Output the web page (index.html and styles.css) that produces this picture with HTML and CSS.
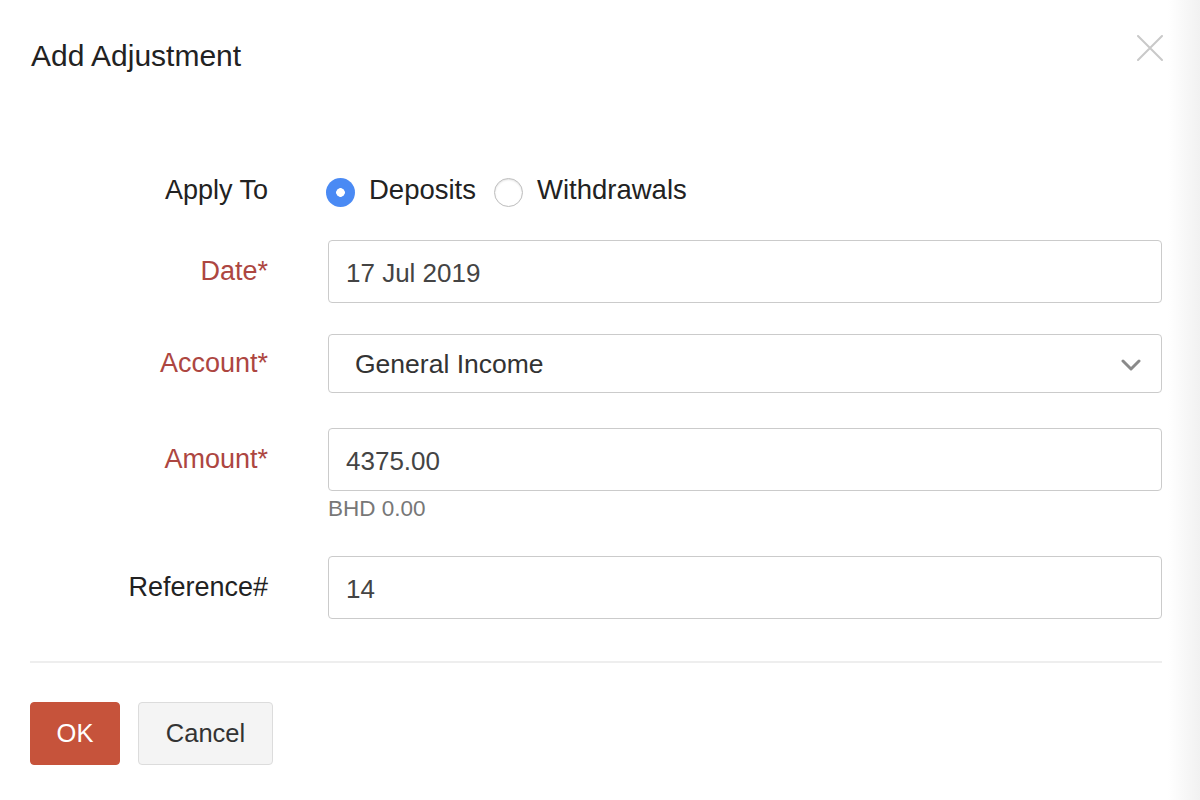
FILE: index.html
```html
<!DOCTYPE html>
<html>
<head>
<meta charset="utf-8">
<link rel="stylesheet" href="styles.css">
</head>
<body>
<div class="dialog">
  <div class="header">
    <h1 class="title">Add Adjustment</h1>
    <button class="close" aria-label="Close">
      <svg width="26" height="26" viewBox="0 0 26 26"><path d="M1 1 L25 25 M25 1 L1 25" stroke="#c9c9c9" stroke-width="2" fill="none" stroke-linecap="round"/></svg>
    </button>
  </div>

  <div class="form">
    <div class="row row-apply">
      <div class="label">Apply To</div>
      <div class="radios">
        <span class="radio checked"></span><span class="radio-text">Deposits</span>
        <span class="radio"></span><span class="radio-text">Withdrawals</span>
      </div>
    </div>

    <div class="row row-date">
      <div class="label req">Date*</div>
      <div class="field"><input class="input" type="text" value="17 Jul 2019"></div>
    </div>

    <div class="row row-account">
      <div class="label req label-select">Account*</div>
      <div class="field">
        <div class="select">
          <span class="select-text">General Income</span>
          <svg class="chevron" width="20" height="12" viewBox="0 0 20 12"><path d="M2 2 L10 10 L18 2" stroke="#8a8a8a" stroke-width="3" fill="none" stroke-linecap="round" stroke-linejoin="round"/></svg>
        </div>
      </div>
    </div>

    <div class="row row-amount">
      <div class="label req">Amount*</div>
      <div class="field">
        <input class="input" type="text" value="4375.00">
        <div class="hint">BHD 0.00</div>
      </div>
    </div>

    <div class="row row-ref">
      <div class="label">Reference#</div>
      <div class="field"><input class="input" type="text" value="14"></div>
    </div>
  </div>

  <div class="footer">
    <button class="btn btn-ok">OK</button>
    <button class="btn btn-cancel">Cancel</button>
  </div>
</div>
</body>
</html>
```

FILE: styles.css
```css
html, body {
  margin: 0;
  padding: 0;
}
body {
  width: 1200px;
  height: 800px;
  overflow: hidden;
  background: linear-gradient(to right, #ffffff 1168px, #f1f1f1 1200px);
  font-family: "Liberation Sans", Arial, sans-serif;
  color: #222;
}
.dialog {
  padding: 0 38px 0 30px;
}
.header {
  display: flex;
  justify-content: space-between;
  align-items: flex-start;
  padding-top: 38px;
}
.title {
  margin: 0;
  font-size: 30px;
  font-weight: normal;
  line-height: 36px;
  color: #222;
  padding-left: 1px;
}
.close {
  background: none;
  border: 0;
  padding: 0;
  margin: -3px -1px 0 0;
  cursor: pointer;
  display: flex;
}
.form {
  padding-top: 98px;
}
.row {
  display: grid;
  grid-template-columns: 238px 1fr;
  column-gap: 60px;
  align-items: start;
}
.label {
  text-align: right;
  font-size: 27px;
  line-height: 63px;
  color: #222;
  white-space: nowrap;
}
.label.req {
  color: #ad4641;
}
.label-select {
  line-height: 59px;
}
.row-apply {
  align-items: center;
  height: 40px;
  margin-top: 0;
}
.row-apply .label {
  line-height: 40px;
  margin-top: -4px;
}
.radios {
  display: flex;
  align-items: center;
}
.radio {
  box-sizing: border-box;
  width: 29px;
  height: 29px;
  border-radius: 50%;
  border: 1px solid #bdbdbd;
  background: #fff;
  box-shadow: inset 0 1px 2px rgba(0,0,0,0.12);
  margin-left: -2px;
  flex: none;
}
.radio.checked {
  border: 0;
  background: radial-gradient(circle, #ffffff 0 4px, #4a8af4 4.6px);
  box-shadow: none;
}
.radio-text {
  font-size: 27.5px;
  line-height: 40px;
  margin: -4px 20px 0 14px;
  color: #222;
}
.row-date { margin-top: 28px; }
.row-account { margin-top: 31px; }
.row-amount { margin-top: 35px; }
.row-ref { margin-top: 30px; }

.field {
  display: flex;
  flex-direction: column;
}
.input {
  box-sizing: border-box;
  width: 100%;
  height: 63px;
  border: 1px solid #cbcbcb;
  border-radius: 4px;
  padding: 4px 16px 0 17px;
  font-family: "Liberation Sans", Arial, sans-serif;
  font-size: 26px;
  color: #444;
  background: #fff;
  outline: none;
}
.select {
  box-sizing: border-box;
  height: 59px;
  border: 1px solid #cbcbcb;
  border-radius: 4px;
  padding: 0 20px 0 26px;
  display: flex;
  align-items: center;
  justify-content: space-between;
  background: #fff;
}
.select-text {
  font-size: 26.5px;
  color: #333;
  padding-top: 2px;
}
.chevron {
  margin-top: 2px;
}
.hint {
  font-size: 22.5px;
  line-height: 34px;
  color: #777;
  margin-top: 1px;
}
.footer {
  margin-top: 42px;
  border-top: 2px solid #eeeeee;
  padding-top: 39px;
  display: flex;
  gap: 18px;
}
.btn {
  box-sizing: border-box;
  height: 63px;
  border-radius: 4px;
  font-family: "Liberation Sans", Arial, sans-serif;
  font-size: 25.5px;
  cursor: pointer;
}
.btn-ok {
  width: 90px;
  background: #c6533b;
  border: 1px solid #c6533b;
  color: #fff;
}
.btn-cancel {
  width: 135px;
  background: #f4f4f4;
  border: 1px solid #dcdcdc;
  color: #333;
}
```
